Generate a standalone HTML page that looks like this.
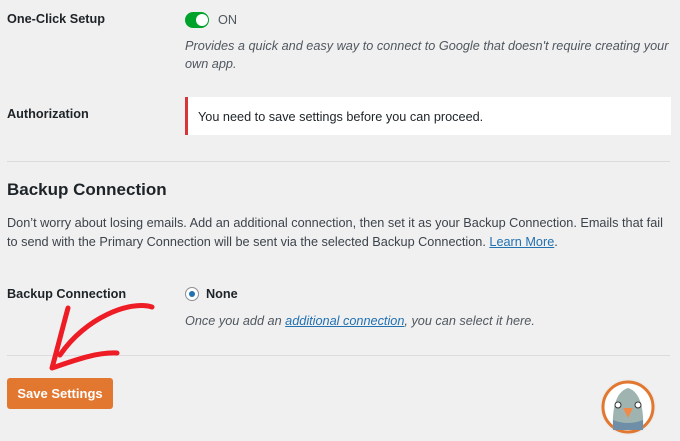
<!DOCTYPE html>
<html><head><style>
body{margin:0;width:680px;height:441px;background:#f0f0f1;font-family:"Liberation Sans",sans-serif;color:#1d2327;font-size:12.7px;position:relative;overflow:hidden}
.a{position:absolute;white-space:nowrap}
.lbl{font-weight:bold;font-size:12.7px}
.it{font-style:italic;color:#50575e;font-size:12.7px}
.hr{position:absolute;left:7px;right:10px;height:1px;background:#dcdcde}
a{color:#2271b1;text-decoration:underline}
</style></head><body>
<div class="a lbl" style="left:7px;top:12px">One-Click Setup</div>
<div class="a" style="left:185px;top:12px;width:24px;height:16px;border-radius:8px;background:#00a32a"></div>
<div class="a" style="left:196px;top:14px;width:12px;height:12px;border-radius:6px;background:#fff"></div>
<div class="a" style="left:218px;top:13px;color:#50575e">ON</div>
<div class="a it" style="left:185px;top:39px">Provides a quick and easy way to connect to Google that doesn't require creating your</div>
<div class="a it" style="left:185px;top:57px">own app.</div>
<div class="a lbl" style="left:7px;top:107px">Authorization</div>
<div class="a" style="left:185px;top:97px;width:483px;height:38px;background:#fff;border-left:3px solid #d63638"></div>
<div class="a" style="left:198px;top:110px">You need to save settings before you can proceed.</div>
<div class="hr" style="top:161px"></div>
<div class="a" style="left:7px;top:180px;font-size:17px;font-weight:bold">Backup Connection</div>
<div class="a" style="left:7px;top:216px;color:#3c434a">Don’t worry about losing emails. Add an additional connection, then set it as your Backup Connection. Emails that fail</div>
<div class="a" style="left:7px;top:235px;color:#3c434a">to send with the Primary Connection will be sent via the selected Backup Connection. <a>Learn More</a>.</div>
<div class="a lbl" style="left:7px;top:287px">Backup Connection</div>
<div class="a" style="left:185px;top:287px;width:14px;height:14px;border-radius:50%;background:#fff;border:1px solid #8c8f94;box-sizing:border-box"></div>
<div class="a" style="left:189px;top:291px;width:6px;height:6px;border-radius:50%;background:#2271b1"></div>
<div class="a" style="left:206px;top:287px;font-weight:bold">None</div>
<div class="a it" style="left:185px;top:314px">Once you add an <a>additional connection</a>, you can select it here.</div>
<div class="hr" style="top:355px"></div>
<div class="a" style="left:7px;top:378px;width:106px;height:31px;background:#e27730;border-radius:3px;color:#fff;font-weight:bold;font-size:13px;line-height:31px;text-align:center">Save Settings</div>
<svg class="a" style="left:0;top:0" width="680" height="441">
<path d="M152 307 C130 300 85 318 60 355 M68 308 C62 330 57 350 52 368 C70 362 95 352 117 353" fill="none" stroke="#ee1c25" stroke-width="5" stroke-linecap="round" stroke-linejoin="round"/>
<circle cx="628" cy="407" r="28" fill="#e8e8e8" opacity="0.6"/>
<circle cx="628" cy="407" r="25" fill="#fff" stroke="#e27730" stroke-width="3"/>
<path d="M613 430 C612 410 615 392 628 388 C641 392 644 410 643 430 Z" fill="#9fb4b0"/>
<path d="M613 420 Q628 426 643 420 L643 430 L613 430Z" fill="#6f8fa8"/>
<circle cx="618" cy="405" r="3" fill="#fff" stroke="#333" stroke-width="1"/>
<circle cx="638" cy="405" r="3" fill="#fff" stroke="#333" stroke-width="1"/>
<path d="M623 408 L633 408 L628 418Z" fill="#f08a4b"/>
</svg>
</body></html>
